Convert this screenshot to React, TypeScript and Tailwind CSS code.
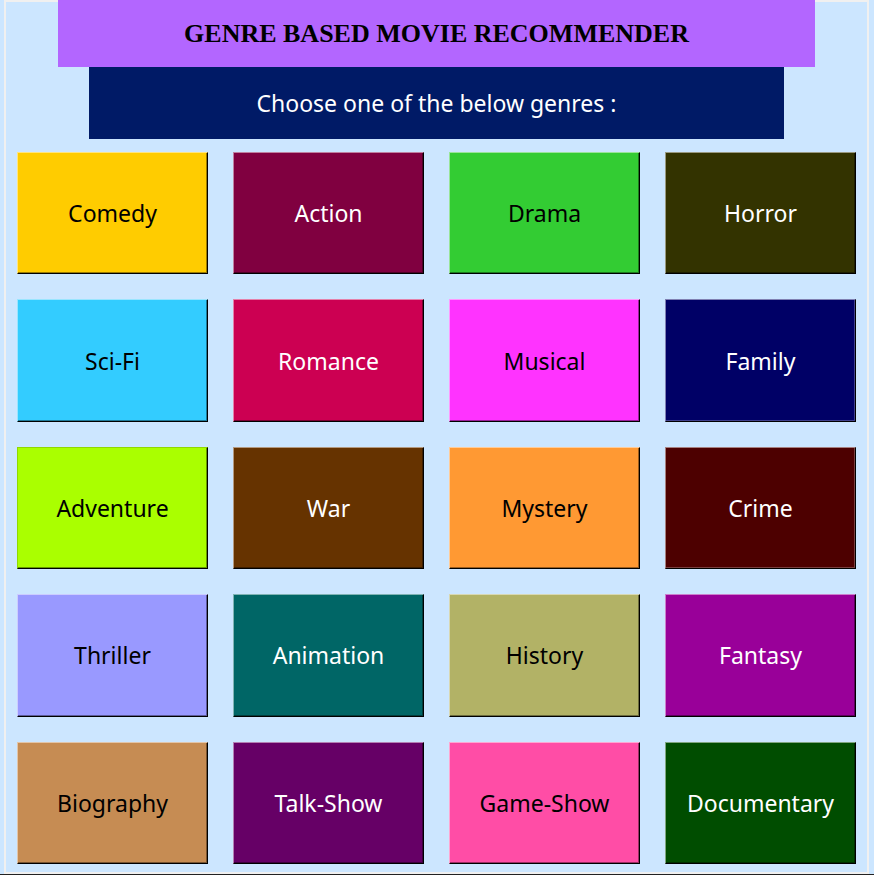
type Genre = { name: string; tone: string };

const LIGHT_EDGE = 'border-t-white/50 border-l-white/50';
const GREEN_EDGE = 'border-t-black/15 border-l-black/15';
const SHADE = 'shadow-[inset_-1px_-1px_0_0_rgba(0,0,0,0.4)]';
const SHEEN = 'shadow-[inset_-1px_-1px_0_0_rgba(255,255,255,0.25)]';

const genres: Genre[] = [
  { name: 'Comedy', tone: `bg-[#ffcc00] text-black ${LIGHT_EDGE} ${SHADE}` },
  { name: 'Action', tone: `bg-[#800040] text-white ${LIGHT_EDGE} ${SHADE}` },
  { name: 'Drama', tone: `bg-[#33cc33] text-black ${LIGHT_EDGE} ${SHADE}` },
  { name: 'Horror', tone: `bg-[#333300] text-white ${LIGHT_EDGE} ${SHADE}` },
  { name: 'Sci-Fi', tone: `bg-[#33ccff] text-black ${LIGHT_EDGE} ${SHADE}` },
  { name: 'Romance', tone: `bg-[#cc0052] text-white ${LIGHT_EDGE} ${SHADE}` },
  { name: 'Musical', tone: `bg-[#ff33ff] text-black ${LIGHT_EDGE} ${SHADE}` },
  { name: 'Family', tone: `bg-[#000066] text-white ${LIGHT_EDGE} ${SHEEN}` },
  { name: 'Adventure', tone: `bg-[#aaff00] text-black ${GREEN_EDGE} ${SHADE}` },
  { name: 'War', tone: `bg-[#663300] text-white ${LIGHT_EDGE} ${SHADE}` },
  { name: 'Mystery', tone: `bg-[#ff9933] text-black ${LIGHT_EDGE} ${SHADE}` },
  { name: 'Crime', tone: `bg-[#4d0000] text-white ${LIGHT_EDGE} ${SHEEN}` },
  { name: 'Thriller', tone: `bg-[#9999ff] text-black ${LIGHT_EDGE} ${SHADE}` },
  { name: 'Animation', tone: `bg-[#006666] text-white ${LIGHT_EDGE} ${SHADE}` },
  { name: 'History', tone: `bg-[#b2b266] text-black ${LIGHT_EDGE} ${SHADE}` },
  { name: 'Fantasy', tone: `bg-[#990099] text-white ${LIGHT_EDGE} ${SHADE}` },
  { name: 'Biography', tone: `bg-[#c68c53] text-black ${LIGHT_EDGE} ${SHADE}` },
  { name: 'Talk-Show', tone: `bg-[#660066] text-white ${LIGHT_EDGE} ${SHADE}` },
  { name: 'Game-Show', tone: `bg-[#ff4da6] text-black ${LIGHT_EDGE} ${SHADE}` },
  { name: 'Documentary', tone: `bg-[#004d00] text-white ${LIGHT_EDGE} ${SHADE}` },
];

function GenreButton({ name, tone }: Genre) {
  return (
    <button
      type="button"
      className={`min-h-20 cursor-pointer border border-r-black border-b-black text-[23px] leading-8 ${tone}`}
    >
      {name}
    </button>
  );
}

export default function App() {
  return (
    <div className="flex min-h-screen flex-col border-b border-[#222222] bg-[#cce6ff] pr-[5px] pl-1 font-['Comic_Sans_MS','Noto_Sans',sans-serif]">
      <main className="flex flex-1 flex-col border-2 border-[#f0f0f0] px-[11px] pb-2">
        <h1 className="mx-[41px] -mt-0.5 bg-[#b366ff] pt-[18px] pb-[17px] text-center font-['Liberation_Serif',serif] text-[26px] leading-8 font-bold text-black">
          GENRE BASED MOVIE RECOMMENDER
        </h1>
        <p className="mx-[72px] bg-[#001a66] py-5 text-center text-[23px] leading-8 text-white">
          Choose one of the below genres :
        </p>
        <div className="mt-[13px] grid flex-1 auto-rows-fr grid-cols-4 gap-[25px]">
          {genres.map((genre) => (
            <GenreButton key={genre.name} {...genre} />
          ))}
        </div>
      </main>
    </div>
  );
}
